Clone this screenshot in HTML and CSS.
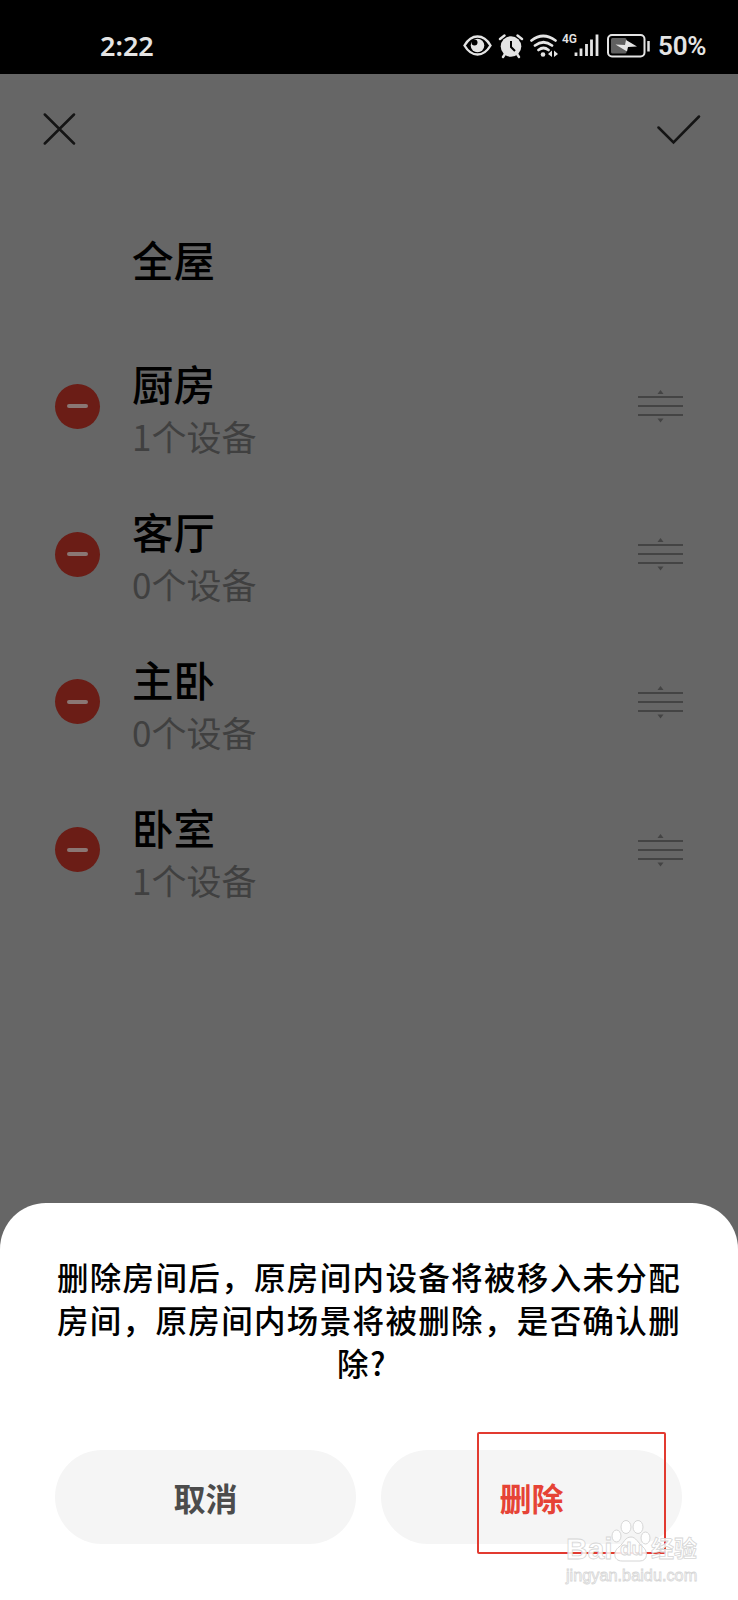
FILE: index.html
```html
<!DOCTYPE html>
<html lang="zh-CN">
  <head>
    <meta charset="UTF-8" />
    <meta name="viewport" content="width=device-width, initial-scale=1.0" />
    <title>房间管理</title>
    <link rel="stylesheet" href="styles.css">
  </head>
  <body>
    <svg class="defs" width="0" height="0">
      <symbol id="handle" viewBox="0 0 46 34">
        <path d="M0 8H45M0 17H45M0 26H45" stroke="#444" stroke-width="2.2" />
        <path d="M19.500 5L22.500 1L25.500 5ZM19.500 29.500L22.500 33.500L25.500 29.500Z" fill="#444" />
      </symbol>
    </svg>
    <div class="status-bar">
      <span class="time">2:22</span>
      <div class="status-icons">
        <svg class="eye" width="30" height="24" viewBox="0 0 30 24">
          <path d="M1.500 12.500C5 6.500 9 3.500 14.500 3.500S24 6.500 27.500 12.500C24 18.500 20 21.500 14.500 21.500S5 18.500 1.500 12.500Z" fill="none" stroke="#e4e4e4" stroke-width="2.400" />
          <circle cx="14.500" cy="12.500" r="6.800" fill="#e4e4e4" />
          <circle cx="11.500" cy="9.500" r="3" fill="#000" />
        </svg>
        <svg class="alarm" width="26" height="26" viewBox="0 0 26 26">
          <circle cx="13" cy="13.500" r="10.300" fill="#e4e4e4" />
          <path d="M2 6L6.500 2.500M24 6L19.500 2.500M7 21L5 24M19 21L21 24" stroke="#e4e4e4" stroke-width="2.400" stroke-linecap="round" />
          <path d="M13 8V14L17 18" fill="none" stroke="#000" stroke-width="2" />
        </svg>
        <svg class="wifi" width="28" height="26" viewBox="0 0 28 26">
          <path d="M1.500 7.500Q13 -1.500 25.500 7.500M5 12.500Q13.500 6 22 12.500M8.500 17Q13.500 13 18.500 17" fill="none" stroke="#e4e4e4" stroke-width="2.700" stroke-linecap="round" />
          <circle cx="13" cy="21.500" r="2.300" fill="#e4e4e4" />
          <path d="M18 21L22 17.500V24ZM28 21L24 17.500V24Z" fill="#e4e4e4" />
        </svg>
        <span class="network">4G</span>
        <svg class="signal" width="25" height="24" viewBox="0 0 25 24">
          <path d="M2 19.500V23M7 15.500V23M12.500 11V23M17.500 6.500V23M23 1.500V23" stroke="#e4e4e4" stroke-width="2.800" />
        </svg>
        <svg class="battery" width="44" height="24" viewBox="0 0 44 24">
          <rect x="1" y="1" width="36.500" height="21.500" rx="4" fill="none" stroke="#e4e4e4" stroke-width="2" />
          <rect x="4" y="4" width="15.500" height="15.500" rx="1.500" fill="#606060" />
          <path d="M8.500 10.500L18 11L19 6L30 12.500L21 13L20 17.500Z" fill="#e4e4e4" />
          <path d="M41.500 7V17.500" stroke="#e4e4e4" stroke-width="2.500" />
        </svg>
        <span class="percent">50%</span>
      </div>
    </div>
    <header>
      <svg width="33" height="33" viewBox="0 0 33 33">
        <path d="M1.800 1.500L31 30.500M31 1.500L1.800 30.500" stroke="#141414" stroke-width="2.500" stroke-linecap="round" />
      </svg>
      <svg width="44" height="30" viewBox="0 0 44 30">
        <path d="M1.500 12.500L16.500 27.500L42 1.500" fill="none" stroke="#141414" stroke-width="2.500" stroke-linecap="round" />
      </svg>
    </header>
    <main>
      <div class="whole-house">全屋</div>
      <ul class="rooms">
        <li>
          <span class="remove"></span>
          <div class="room">
            <h2>厨房</h2>
            <p>1个设备</p>
          </div>
          <svg class="handle"><use href="#handle" /></svg>
        </li>
        <li>
          <span class="remove"></span>
          <div class="room">
            <h2>客厅</h2>
            <p>0个设备</p>
          </div>
          <svg class="handle"><use href="#handle" /></svg>
        </li>
        <li>
          <span class="remove"></span>
          <div class="room">
            <h2>主卧</h2>
            <p>0个设备</p>
          </div>
          <svg class="handle"><use href="#handle" /></svg>
        </li>
        <li>
          <span class="remove"></span>
          <div class="room">
            <h2>卧室</h2>
            <p>1个设备</p>
          </div>
          <svg class="handle"><use href="#handle" /></svg>
        </li>
      </ul>
    </main>
    <section class="sheet">
      <p class="message">删除房间后，原房间内设备将被移入未分配<br>房间，原房间内场景将被删除，是否确认删<br>除<span class="mark">?</span></p>
      <div class="actions">
        <button class="cancel">取消</button>
        <button class="delete">删除</button>
      </div>
      <div class="highlight"></div>
      <div class="watermark">
        <div class="brand">
          <span class="bai">Bai</span>
          <div class="paw">
            <svg width="40" height="44" viewBox="0 0 40 44">
              <g fill="#fff" fill-opacity="0.85" stroke="#d6d6d6" stroke-width="1">
                <ellipse cx="5.500" cy="17" rx="4.500" ry="6" />
                <ellipse cx="15" cy="8" rx="5" ry="6.500" />
                <ellipse cx="27" cy="8" rx="5" ry="6.500" />
                <ellipse cx="34.500" cy="19" rx="4.500" ry="6" />
                <path d="M20 18C25 18 27 24 32 28C37 32 37 42 29 42H11C2 42 2 32 8 28C13 24 14 18 20 18Z" />
              </g>
            </svg>
            <span class="du">du</span>
          </div>
          <span class="jingyan">经验</span>
        </div>
        <div class="url">jingyan.baidu.com</div>
      </div>
    </section>
  </body>
</html>
```

FILE: styles.css
```css
* {
  margin: 0;
  padding: 0;
  box-sizing: border-box;
}
body {
  display: flex;
  flex-direction: column;
  height: 1600px;
  overflow: hidden;
  background-color: #666;
  font-family: "Noto Sans CJK SC", sans-serif;
}
.defs {
  position: absolute;
}
.status-bar {
  display: flex;
  justify-content: space-between;
  align-items: flex-start;
  height: 74px;
  padding: 33px 30px 0 100px;
  background-color: #000;
  color: #e4e4e4;
  font-family: "Noto Sans", sans-serif;
  font-weight: 600;
}
.time {
  font-size: 27px;
  line-height: 26px;
}
.status-icons {
  display: flex;
  align-items: flex-start;
}
.eye {
  margin-left: -1px;
}
.alarm {
  margin-left: 5px;
}
.wifi {
  margin-left: 6px;
}
.network {
  width: 14px;
  margin-left: 4px;
  font-family: Roboto, sans-serif;
  font-size: 12px;
  line-height: 13px;
}
.signal {
  margin-left: -2px;
}
.battery {
  margin: 1px 7px 0 8px;
}
.percent {
  width: 50px;
  font-family: Roboto, sans-serif;
  font-size: 26px;
  font-weight: 600;
  letter-spacing: -0.2px;
  line-height: 27px;
}
header {
  display: flex;
  justify-content: space-between;
  align-items: center;
  height: 111px;
  padding: 0 37px 0 43px;
}
.whole-house {
  height: 147.5px;
  padding-left: 132px;
  font-size: 41.5px;
  font-weight: 500;
  line-height: 148px;
}
.rooms {
  list-style: none;
}
.rooms li {
  display: flex;
  align-items: center;
  height: 147.8px;
  padding: 0 54px 0 55px;
}
.remove {
  display: flex;
  align-items: center;
  justify-content: center;
  width: 45px;
  height: 45px;
  border-radius: 50%;
  background-color: #6b1d16;
}
.remove::before {
  content: "";
  width: 21px;
  height: 4px;
  border-radius: 2px;
  background-color: #8a7774;
}
.room {
  flex: 1;
  margin: 2px 0 0 32px;
}
.room h2 {
  font-size: 41.5px;
  font-weight: 500;
  line-height: 52px;
}
.room p {
  margin-top: 6px;
  color: #404040;
  font-size: 35px;
  line-height: 42px;
}
.handle {
  width: 46px;
  height: 34px;
}
.sheet {
  position: relative;
  height: 397px;
  margin-top: auto;
  padding: 52px 56px 0;
  border-radius: 46px 46px 0 0;
  background-color: #fff;
}
.message {
  color: #000;
  font-size: 31.5px;
  font-weight: 500;
  letter-spacing: 1.35px;
  line-height: 43.2px;
  text-align: center;
  white-space: nowrap;
}
.mark {
  display: inline-block;
  width: 31px;
  text-align: left;
}
.actions {
  display: flex;
  gap: 25px;
  margin-top: 65px;
}
button {
  flex: 1;
  height: 94px;
  border: none;
  border-radius: 47px;
  background-color: #f5f5f5;
  color: #4c4c4c;
  font-family: inherit;
  font-size: 32px;
  font-weight: 700;
}
.actions {
  margin-left: -1px;
}
.delete {
  color: #e64336;
}
.highlight {
  position: absolute;
  top: 229px;
  left: 477px;
  width: 189px;
  height: 122px;
  border: 2px solid #e23a30;
  border-radius: 2px;
}
.watermark {
  position: absolute;
  top: 312px;
  left: 566px;
  width: 134px;
  color: rgba(255, 255, 255, 0.85);
  font-family: "Liberation Sans", "Noto Sans CJK SC", sans-serif;
  -webkit-text-stroke: 0.8px #d6d6d6;
}
.brand {
  display: flex;
  align-items: flex-end;
  height: 48px;
}
.bai {
  width: 45px;
  font-size: 30px;
  font-weight: 700;
  line-height: 28px;
}
.paw {
  position: relative;
  width: 40px;
  height: 44px;
}
.du {
  position: absolute;
  top: 20px;
  left: 9px;
  font-size: 19px;
  font-weight: 700;
  line-height: 20px;
}
.jingyan {
  font-size: 23px;
  font-weight: 700;
  line-height: 27px;
}
.url {
  font-size: 16.3px;
  line-height: 24px;
}
```
